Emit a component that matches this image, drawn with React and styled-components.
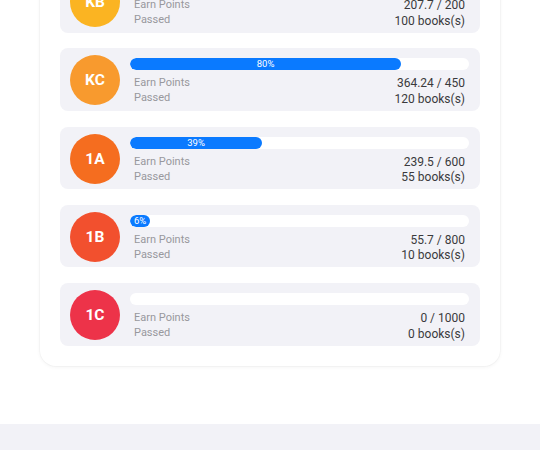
import React from "react";
import styled, { createGlobalStyle } from "styled-components";

const GlobalStyle = createGlobalStyle`
  html, body { margin: 0; padding: 0; background: #ffffff; }
  body { font-family: Roboto, "Noto Sans", "Liberation Sans", sans-serif; overflow: hidden; }
`;

const Page = styled.div`
  width: 540px;
  margin-top: -50px;
  background: #ffffff;
`;

const Section = styled.div`
  padding: 0 40px;
`;

const Card = styled.div`
  background: #ffffff;
  border-radius: 16px;
  box-shadow: 0 0 0 1px rgba(0, 0, 0, 0.025), 0 1px 4px rgba(0, 0, 0, 0.05);
  padding: 20px;
  display: flex;
  flex-direction: column;
  gap: 15.8px;
`;

const Row = styled.div`
  background: #f2f2f7;
  border-radius: 8px;
  height: 62.5px;
  box-sizing: border-box;
  padding: 10px 11px 0 10px;
  display: flex;
  align-items: flex-start;
  gap: 10px;
`;

const Avatar = styled.div`
  width: 50px;
  height: 50px;
  margin-top: -3px;
  border-radius: 50%;
  background: ${(p) => p.$color};
  color: #ffffff;
  font-weight: 700;
  font-size: 15.5px;
  display: flex;
  align-items: center;
  justify-content: center;
  flex-shrink: 0;
`;

const Body = styled.div`
  flex: 1;
  display: flex;
  flex-direction: column;
`;

const Track = styled.div`
  height: 12px;
  border-radius: 6px;
  background: #ffffff;
  overflow: hidden;
  display: flex;
`;

const Fill = styled.div`
  height: 100%;
  border-radius: 6px;
  background: #0a7aff;
  color: #ffffff;
  font-size: 9.5px;
  line-height: 12px;
  text-align: center;
  white-space: nowrap;
`;

const Stats = styled.div`
  display: flex;
  justify-content: space-between;
  padding: 5px 4px 0 4px;
`;

const Labels = styled.div`
  display: flex;
  flex-direction: column;
  font-size: 11px;
  line-height: 15px;
  color: #98989d;
`;

const Values = styled.div`
  display: flex;
  flex-direction: column;
  align-items: flex-end;
  font-size: 12px;
  line-height: 15.5px;
  color: #3a3a3c;
  padding-top: 1px;
`;

const Spacer = styled.div`
  height: 58px;
`;

const Footer = styled.div`
  height: 60px;
  background: #f2f2f7;
`;

const data = [
  { code: "KB", color: "#fbb422", pct: 100, label: "104%", points: "207.7 / 200", books: "100 books(s)" },
  { code: "KC", color: "#f89a2e", pct: 80, label: "80%", points: "364.24 / 450", books: "120 books(s)" },
  { code: "1A", color: "#f56d1f", pct: 39, label: "39%", points: "239.5 / 600", books: "55 books(s)" },
  { code: "1B", color: "#f2502e", pct: 6, label: "6%", points: "55.7 / 800", books: "10 books(s)" },
  { code: "1C", color: "#ed3349", pct: 0, label: "", points: "0 / 1000", books: "0 books(s)" },
];

export default function App() {
  return (
    <>
      <GlobalStyle />
      <Page>
        <Section>
          <Card>
            {data.map((d) => (
              <Row key={d.code}>
                <Avatar $color={d.color}>{d.code}</Avatar>
                <Body>
                  <Track>
                    {d.pct > 0 && (
                      <Fill style={{ width: `${Math.max(d.pct, 6)}%` }}>{d.label}</Fill>
                    )}
                  </Track>
                  <Stats>
                    <Labels>
                      <span>Earn Points</span>
                      <span>Passed</span>
                    </Labels>
                    <Values>
                      <span>{d.points}</span>
                      <span>{d.books}</span>
                    </Values>
                  </Stats>
                </Body>
              </Row>
            ))}
          </Card>
        </Section>
        <Spacer />
        <Footer />
      </Page>
    </>
  );
}
